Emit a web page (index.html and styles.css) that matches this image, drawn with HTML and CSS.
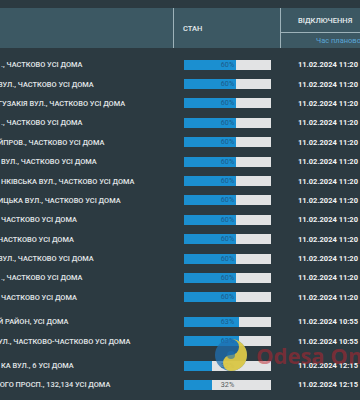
FILE: index.html
```html
<!DOCTYPE html>
<html lang="uk">
<head>
<meta charset="utf-8">
<link rel="stylesheet" href="styles.css">
</head>
<body>
<div class="page">
  <div class="head">
    <div class="h-name"></div>
    <div class="h-state">СТАН</div>
    <div class="h-off">
      <div class="h-off-top">ВІДКЛЮЧЕННЯ</div>
      <div class="h-off-sub">Час планового</div>
    </div>
  </div>
  <div class="rows">
    <div class="group">
      <div class="row"><div class="name">., ЧАСТКОВО УСІ ДОМА</div><div class="state"><div class="bar"><div class="fill" style="width:60%"></div><span class="pct">60%</span></div></div><div class="date">11.02.2024 11:20</div></div>
      <div class="row"><div class="name shift">ВУЛ., ЧАСТКОВО УСІ ДОМА</div><div class="state"><div class="bar"><div class="fill" style="width:60%"></div><span class="pct">60%</span></div></div><div class="date">11.02.2024 11:20</div></div>
      <div class="row"><div class="name shift">ГУЗАКІЯ ВУЛ., ЧАСТКОВО УСІ ДОМА</div><div class="state"><div class="bar"><div class="fill" style="width:60%"></div><span class="pct">60%</span></div></div><div class="date">11.02.2024 11:20</div></div>
      <div class="row"><div class="name">., ЧАСТКОВО УСІ ДОМА</div><div class="state"><div class="bar"><div class="fill" style="width:60%"></div><span class="pct">60%</span></div></div><div class="date">11.02.2024 11:20</div></div>
      <div class="row"><div class="name shift">ЙПРОВ., ЧАСТКОВО УСІ ДОМА</div><div class="state"><div class="bar"><div class="fill" style="width:60%"></div><span class="pct">60%</span></div></div><div class="date">11.02.2024 11:20</div></div>
      <div class="row"><div class="name">ВУЛ., ЧАСТКОВО УСІ ДОМА</div><div class="state"><div class="bar"><div class="fill" style="width:60%"></div><span class="pct">60%</span></div></div><div class="date">11.02.2024 11:20</div></div>
      <div class="row"><div class="name">НКІВСЬКА ВУЛ., ЧАСТКОВО УСІ ДОМА</div><div class="state"><div class="bar"><div class="fill" style="width:60%"></div><span class="pct">60%</span></div></div><div class="date">11.02.2024 11:20</div></div>
      <div class="row"><div class="name shift">ИЦЬКА ВУЛ., ЧАСТКОВО УСІ ДОМА</div><div class="state"><div class="bar"><div class="fill" style="width:60%"></div><span class="pct">60%</span></div></div><div class="date">11.02.2024 11:20</div></div>
      <div class="row"><div class="name">ЧАСТКОВО УСІ ДОМА</div><div class="state"><div class="bar"><div class="fill" style="width:60%"></div><span class="pct">60%</span></div></div><div class="date">11.02.2024 11:20</div></div>
      <div class="row"><div class="name shift">ЧАСТКОВО УСІ ДОМА</div><div class="state"><div class="bar"><div class="fill" style="width:60%"></div><span class="pct">60%</span></div></div><div class="date">11.02.2024 11:20</div></div>
      <div class="row"><div class="name shift">ВУЛ., ЧАСТКОВО УСІ ДОМА</div><div class="state"><div class="bar"><div class="fill" style="width:60%"></div><span class="pct">60%</span></div></div><div class="date">11.02.2024 11:20</div></div>
      <div class="row"><div class="name">., ЧАСТКОВО УСІ ДОМА</div><div class="state"><div class="bar"><div class="fill" style="width:60%"></div><span class="pct">60%</span></div></div><div class="date">11.02.2024 11:20</div></div>
      <div class="row"><div class="name">ЧАСТКОВО УСІ ДОМА</div><div class="state"><div class="bar"><div class="fill" style="width:60%"></div><span class="pct">60%</span></div></div><div class="date">11.02.2024 11:20</div></div>
    </div>
    <div class="group">
      <div class="row"><div class="name shift">Й РАЙОН, УСІ ДОМА</div><div class="state"><div class="bar"><div class="fill" style="width:63%"></div><span class="pct">63%</span></div></div><div class="date">11.02.2024 10:55</div></div>
      <div class="row"><div class="name shift">УЛ., ЧАСТКОВО-ЧАСТКОВО УСІ ДОМА</div><div class="state"><div class="bar"><div class="fill" style="width:63%"></div><span class="pct">63%</span></div></div><div class="date">11.02.2024 10:55</div></div>
    </div>
    <div class="group">
      <div class="row"><div class="name">КА ВУЛ., 6 УСІ ДОМА</div><div class="state"><div class="bar"><div class="fill" style="width:32%"></div><span class="pct grey">32%</span></div></div><div class="date">11.02.2024 12:15</div></div>
      <div class="row"><div class="name shift">ЮГО ПРОСП., 132,134 УСІ ДОМА</div><div class="state"><div class="bar"><div class="fill" style="width:32%"></div><span class="pct grey">32%</span></div></div><div class="date">11.02.2024 12:15</div></div>
    </div>
  </div>
  <div class="watermark">
    <svg class="wm-logo" width="34" height="34" viewBox="0 0 34 34">
      <circle cx="17" cy="17" r="16" fill="#1f6fb0" opacity="0.75"/>
      <path d="M17 1 A16 16 0 0 1 17 33 A8 8 0 0 1 17 17 A8 8 0 0 0 17 1 Z" fill="#f2d23a" opacity="0.85"/>
      <circle cx="17" cy="17" r="4" fill="#1f6fb0" opacity="0.6"/>
    </svg>
    <span class="wm-text">Odesa Online</span>
  </div>
</div>
</body>
</html>
```
FILE: styles.css
```css
html, body {
  margin: 0;
  padding: 0;
  background: #2c3a41;
}
body {
  font-family: Roboto, "Noto Sans", sans-serif;
  width: 360px;
  height: 400px;
  overflow: hidden;
}
.page {
  position: relative;
  width: 360px;
  height: 400px;
  overflow: hidden;
  padding-top: 8px;
  box-sizing: border-box;
}
.head {
  display: grid;
  grid-template-columns: 174px 107px 1fr;
  height: 40px;
  background: #3c5863;
  color: #e6ecee;
  font-size: 7.5px;
  font-weight: 500;
}
.h-name {
  border-right: 1px solid #9db2b9;
}
.h-state {
  display: flex;
  align-items: center;
  padding-left: 9px;
  border-right: 1px solid #9db2b9;
}
.h-off {
  display: grid;
  grid-template-rows: 25px 1fr;
  overflow: hidden;
  white-space: nowrap;
}
.h-off-top {
  display: flex;
  align-items: center;
  padding-left: 17px;
  border-bottom: 1px solid #9db2b9;
}
.h-off-sub {
  display: flex;
  align-items: center;
  padding-left: 35px;
  color: #5aa5d6;
  font-weight: 400;
}
.rows {
  padding-top: 7px;
  display: flex;
  flex-direction: column;
  gap: 5px;
}
.row {
  display: grid;
  grid-template-columns: 174px 107px 1fr;
  height: 19.4px;
  align-items: center;
}
.name {
  color: #e3e7e9;
  font-size: 7.4px;
  font-weight: 500;
  white-space: nowrap;
  overflow: hidden;
  padding-left: 1px;
}
.name.shift {
  text-indent: -3px;
}
.state {
  padding-left: 10px;
}
.bar {
  position: relative;
  width: 87px;
  height: 10px;
  background: #e2e3e4;
}
.fill {
  height: 100%;
  background: #1b8fd0;
}
.pct {
  position: absolute;
  top: 0;
  left: 0;
  right: 0;
  text-align: center;
  line-height: 10px;
  font-size: 7.2px;
  color: #1d5c8c;
}
.pct.grey {
  color: #555c60;
}
.date {
  padding-left: 17px;
  color: #f1f3f4;
  font-size: 7.5px;
  font-weight: 700;
  white-space: nowrap;
  overflow: hidden;
}
.watermark {
  position: absolute;
  left: 214px;
  top: 338px;
  display: flex;
  align-items: center;
  gap: 8px;
  pointer-events: none;
  white-space: nowrap;
}
.wm-text {
  font-family: "Open Sans", "Noto Sans", sans-serif;
  font-weight: 700;
  font-size: 22px;
  color: rgba(190, 35, 45, 0.5);
}
```
